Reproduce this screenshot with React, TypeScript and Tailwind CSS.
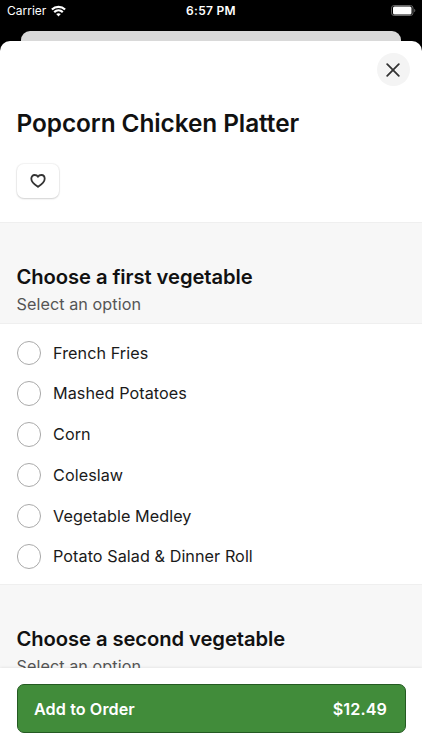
const options = ['French Fries', 'Mashed Potatoes', 'Corn', 'Coleslaw', 'Vegetable Medley', 'Potato Salad & Dinner Roll'];

const StatusBar = () => {
    return (
        <div className="grid h-[31px] shrink-0 grid-cols-3 items-start pt-[3px] text-[12px] leading-4 text-white">
            <div className="flex items-center gap-[5px] pl-[7px]">
                Carrier
                <svg width="15" height="12" viewBox="0 0 15 12" fill="none" stroke="white" strokeWidth="2.2">
                    <path d="M0.9 4.5C4.6 1 10.4 1 14.1 4.5" />
                    <path d="M3.2 7.1C5.7 4.8 9.3 4.8 11.8 7.1" />
                    <path d="M7.5 11.4L5.2 9.1C6.5 7.9 8.5 7.9 9.8 9.1Z" fill="white" stroke="none" />
                </svg>
            </div>
            <div className="text-center font-semibold tracking-[0.3px]">6:57 PM</div>
            <div className="flex justify-end pt-[2px] pr-[6px]">
                <svg width="25" height="11" viewBox="0 0 25 11">
                    <rect x="0.5" y="0.5" width="21.5" height="10" rx="2.6" fill="none" stroke="#666" />
                    <rect x="2" y="1.5" width="18.5" height="8" rx="1.5" fill="white" />
                    <path d="M23.2 3.8C24.7 4.4 24.7 6.6 23.2 7.2Z" fill="#666" />
                </svg>
            </div>
        </div>
    );
};

const SectionHeader = ({ title }: { title: string }) => {
    return (
        <div className="h-[102px] border-y border-[#efefef] bg-[#f7f7f7] px-[16.5px] pt-[39.6px]">
            <h2 className="text-[20.2px] leading-[28px] font-semibold tracking-[-0.07px] text-[#111]">{title}</h2>
            <p className="text-[16.2px] leading-[26px] tracking-[0.06px] text-[#555]">Select an option</p>
        </div>
    );
};

const App = () => {
    return (
        <div className="flex h-[750px] w-[422px] flex-col overflow-hidden bg-black font-['Inter',sans-serif]">
            <StatusBar />
            <div className="mx-[21px] h-[10px] shrink-0 rounded-t-[9px] bg-[#d9d9d9]" />
            <div className="flex min-h-0 flex-1 flex-col overflow-hidden rounded-t-[10px] bg-white">
                <div className="min-h-0 flex-1 overflow-hidden">
                    <div className="h-[181px] px-[16.5px] pt-[12px]">
                        <div className="-mr-[4px] flex justify-end">
                            <button type="button" aria-label="Close" className="flex size-[33px] items-center justify-center rounded-full bg-[#f4f4f4]">
                                <svg width="14" height="14" viewBox="0 0 14 14" fill="none" stroke="#333" strokeWidth="1.8" strokeLinecap="round">
                                    <path d="M1.2 1.2L12.8 12.8M12.8 1.2L1.2 12.8" />
                                </svg>
                            </button>
                        </div>
                        <h1 className="mt-[21px] text-[24.4px] leading-[32px] font-semibold tracking-[-0.08px] text-[#111]">Popcorn Chicken Platter</h1>
                        <button
                            type="button"
                            aria-label="Favorite"
                            className="mt-[25px] flex h-[34px] w-[42px] items-center justify-center rounded-[7px] bg-white shadow-[0_1px_2px_rgba(0,0,0,0.14),0_0_1px_1px_rgba(0,0,0,0.05)]"
                        >
                            <svg width="16" height="14" viewBox="0 0 16 14" fill="none" stroke="#333" strokeWidth="1.8" strokeLinejoin="round">
                                <path d="M8 12.9C6 11.6 1.3 8.6 1.3 4.8C1.3 2.6 2.7 1 4.6 1C6.1 1 7.4 1.7 8 2.8C8.6 1.7 9.9 1 11.4 1C13.3 1 14.7 2.6 14.7 4.8C14.7 8.6 10 11.6 8 12.9Z" />
                            </svg>
                        </button>
                    </div>
                    <SectionHeader title="Choose a first vegetable" />
                    <div className="flex h-[260.4px] flex-col px-[16.5px] pt-[8.4px]">
                        {options.map((option) => (
                            <label key={option} className="flex h-[40.75px] shrink-0 items-center gap-[12px] text-[16.2px] tracking-[0.06px] text-[#1a1a1a]">
                                <span className="size-[24.5px] rounded-full border border-[#aaa]" />
                                {option}
                            </label>
                        ))}
                    </div>
                    <SectionHeader title="Choose a second vegetable" />
                </div>
                <div className="z-10 h-[82px] shrink-0 bg-white px-[16.5px] pt-[16.4px] shadow-[0_0_3px_rgba(0,0,0,0.12)]">
                    <button
                        type="button"
                        className="flex h-[49px] w-full items-center justify-between rounded-[7px] border border-[#245a22] bg-[#418c3a] pt-[1px] pr-[17.5px] pl-[16.5px] text-[16.2px] font-semibold tracking-[0.08px] text-white"
                    >
                        <span>Add to Order</span>
                        <span>$12.49</span>
                    </button>
                </div>
            </div>
        </div>
    );
};

export default App;
